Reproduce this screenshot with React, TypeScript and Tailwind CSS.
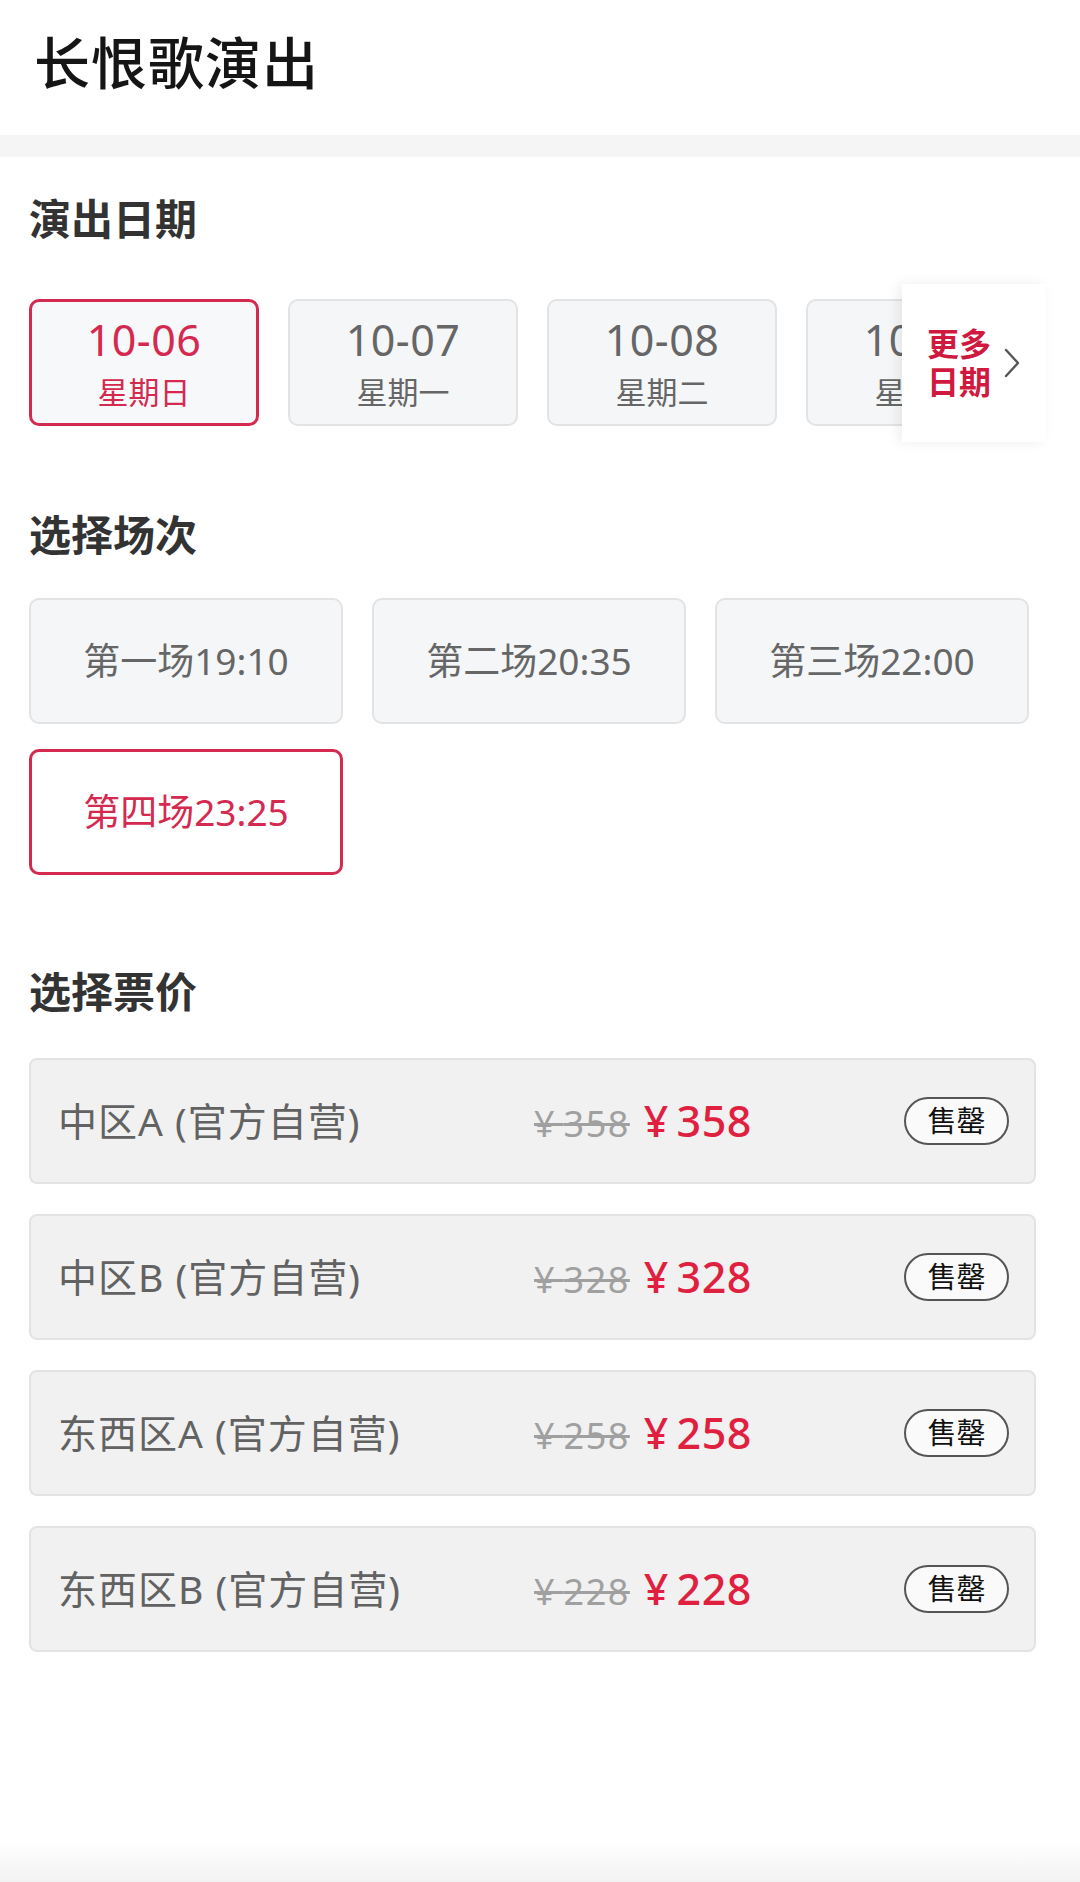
import React from "react";

const FONT = '"Noto Sans", "Noto Sans CJK SC", sans-serif';

const dates = [
  { d: "10-06", w: "星期日", active: true },
  { d: "10-07", w: "星期一", active: false },
  { d: "10-08", w: "星期二", active: false },
  { d: "10-09", w: "星期三", active: false },
];

const sessions = [
  { t: "第一场19:10", active: false },
  { t: "第二场20:35", active: false },
  { t: "第三场22:00", active: false },
  { t: "第四场23:25", active: true },
];

const prices = [
  { name: "中区A (官方自营)", p: "358" },
  { name: "中区B (官方自营)", p: "328" },
  { name: "东西区A (官方自营)", p: "258" },
  { name: "东西区B (官方自营)", p: "228" },
];

export default function App() {
  return (
    <div
      className="w-[1080px] min-h-[1882px] bg-white flex flex-col"
      style={{ fontFamily: FONT }}
    >
      <div className="h-[135px] flex items-center pl-[34px] pb-[12px]">
        <h1 className="text-[56px] leading-none font-medium text-[#151515] tracking-[1px]">
          长恨歌演出
        </h1>
      </div>
      <div className="h-[22px] bg-[#f5f5f5]" />

      <div className="px-[29px]">
        <h2 className="mt-[41px] text-[42px] leading-[42px] font-bold text-[#333]">
          演出日期
        </h2>
        <div className="relative mt-[59px] h-[127px]">
          <div className="flex gap-[29px] overflow-hidden w-[873px]">
            {dates.map((x) => (
              <div
                key={x.d}
                className={
                  "shrink-0 w-[230px] h-[127px] rounded-[10px] flex flex-col items-center justify-center " +
                  (x.active
                    ? "border-[3px] border-[#d42a50] bg-[#f7f8fa]"
                    : "border-2 border-[#e2e3e5] bg-[#f5f6f8]")
                }
              >
                <div
                  className={
                    "text-[43px] leading-[46px] tracking-[0.5px] " +
                    (x.active ? "text-[#d42a50]" : "text-[#666]")
                  }
                >
                  {x.d}
                </div>
                <div
                  className={
                    "mt-[12px] text-[31px] leading-[34px] " +
                    (x.active ? "text-[#d42a50]" : "text-[#666]")
                  }
                >
                  {x.w}
                </div>
              </div>
            ))}
          </div>
          <div className="absolute left-[873px] top-[-15px] w-[144px] h-[158px] bg-white shadow-[-4px_0_12px_rgba(0,0,0,0.07)] flex items-center pl-[25px]">
            <div className="text-[32px] leading-[38px] font-bold text-[#d0193f]">
              <div>更多</div>
              <div>日期</div>
            </div>
            <svg
              className="ml-[12px]"
              width="18"
              height="32"
              viewBox="0 0 18 32"
              fill="none"
            >
              <path
                d="M3 3 L15 16 L3 29"
                stroke="#555"
                strokeWidth="2.4"
                strokeLinecap="round"
                strokeLinejoin="round"
              />
            </svg>
          </div>
        </div>

        <h2 className="mt-[88px] text-[42px] leading-[42px] font-bold text-[#333]">
          选择场次
        </h2>
        <div className="mt-[42px] grid grid-cols-[314px_314px_314px] gap-x-[29px] gap-y-[25px]">
          {sessions.map((s) => (
            <div
              key={s.t}
              className={
                "h-[126px] rounded-[10px] flex items-center justify-center text-[37px] " +
                (s.active
                  ? "border-[3px] border-[#d42a50] bg-white text-[#d42a50]"
                  : "border-2 border-[#e2e3e5] bg-[#f5f6f8] text-[#666]")
              }
            >
              {s.t}
            </div>
          ))}
        </div>

        <h2 className="mt-[96px] text-[42px] leading-[42px] font-bold text-[#333]">
          选择票价
        </h2>
        <div className="mt-[45px] flex flex-col gap-[30px] w-[1007px]">
          {prices.map((r) => (
            <div
              key={r.name}
              className="h-[126px] rounded-[8px] border-2 border-[#e3e3e3] bg-[#f1f1f1] flex items-center pl-[27px] pr-[25px]"
            >
              <div className="w-[476px] text-[39px] tracking-[1px] text-[#626262]">
                {r.name}
              </div>
              <div className="flex items-baseline">
                <span className="text-[36px] tracking-[1.5px] text-[#a0a0a0] line-through">
                  ¥&thinsp;{r.p}
                </span>
                <span className="ml-[14px] text-[43px] tracking-[0.5px] font-medium text-[#e0203f]">
                  ¥&thinsp;{r.p}
                </span>
              </div>
              <div className="ml-auto w-[105px] h-[48px] rounded-full border-[2.5px] border-[#555] bg-[#fafafa] flex items-center justify-center text-[29px] text-[#111]">
                售罄
              </div>
            </div>
          ))}
        </div>
      </div>

      <div className="mt-auto h-[40px] bg-gradient-to-b from-white to-[#f2f2f2]" />
    </div>
  );
}
